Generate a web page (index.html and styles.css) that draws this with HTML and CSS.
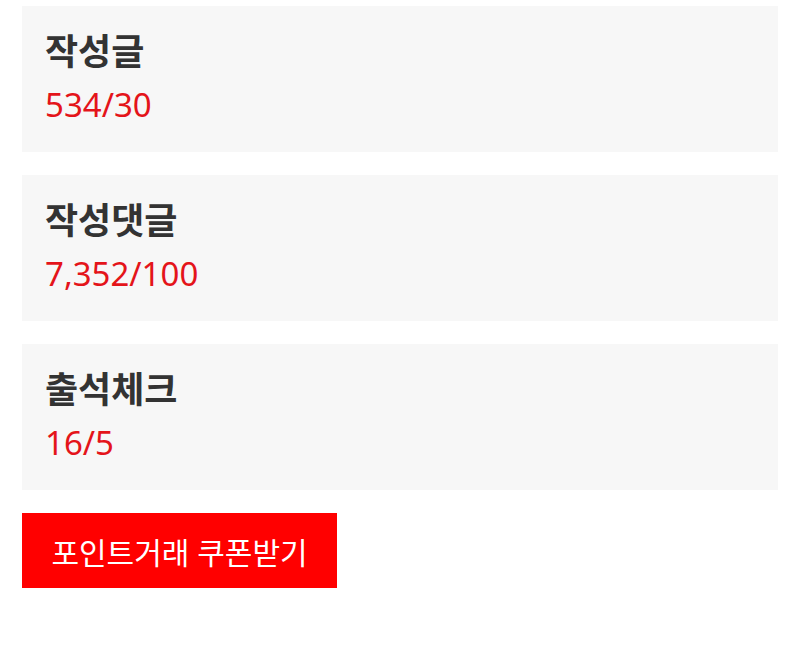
FILE: index.html
```html
<!DOCTYPE html>
<html lang="ko">
<head>
<meta charset="utf-8">
<link rel="stylesheet" href="styles.css">
</head>
<body>
<div class="page">
  <div class="card">
    <div class="title">작성글</div>
    <div class="value">534/30</div>
  </div>
  <div class="card">
    <div class="title">작성댓글</div>
    <div class="value">7,352/100</div>
  </div>
  <div class="card">
    <div class="title">출석체크</div>
    <div class="value">16/5</div>
  </div>
  <div class="actions">
    <button class="btn">포인트거래 쿠폰받기</button>
  </div>
</div>
</body>
</html>
```
FILE: styles.css
```css
html, body { margin: 0; padding: 0; background: #fff; }
body { font-family: "Noto Sans", "Noto Sans CJK KR", sans-serif; }
.page {
  padding: 6px 22px 0 22px;
  display: flex;
  flex-direction: column;
  gap: 23px;
}
.card {
  background: #f7f7f7;
  height: 146px;
  box-sizing: border-box;
  padding: 24px 23px 0 23px;
}
.title {
  font-size: 36px;
  font-weight: 700;
  color: #333;
  line-height: 44px;
}
.value {
  margin-top: 8px;
  font-size: 33px;
  color: #e4141a;
  line-height: 46px;
}
.actions { display: flex; }
.btn {
  background: #ff0000;
  color: #fff;
  border: none;
  font-family: inherit;
  font-size: 30px;
  height: 75px;
  width: 315px;
  padding: 0;
  margin: 0;
  cursor: pointer;
}
```
